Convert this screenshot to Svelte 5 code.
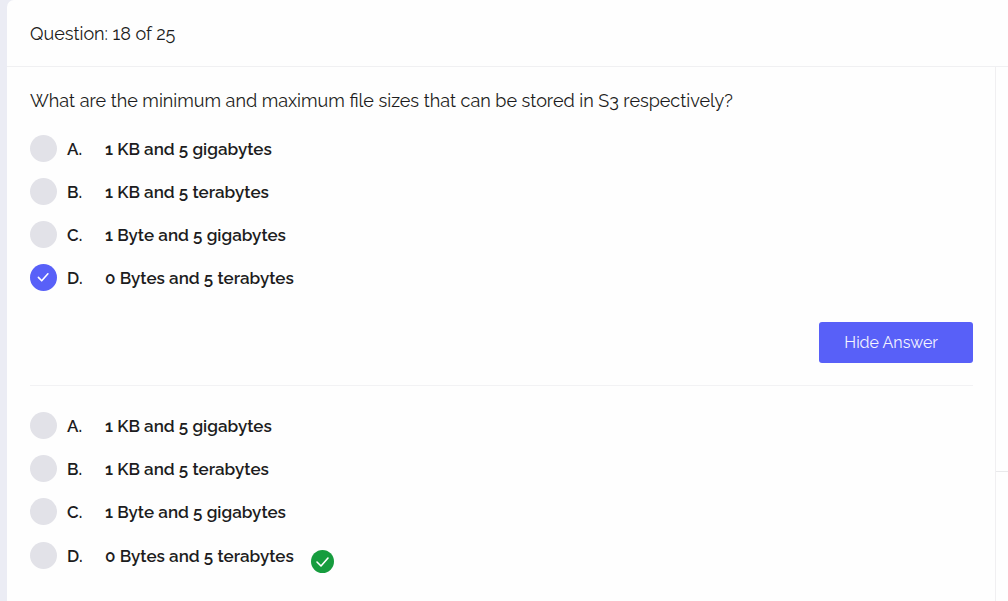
<script>
  const options = [
    { letter: 'A', text: '1 KB and 5 gigabytes' },
    { letter: 'B', text: '1 KB and 5 terabytes' },
    { letter: 'C', text: '1 Byte and 5 gigabytes' },
    { letter: 'D', text: '0 Bytes and 5 terabytes' }
  ];
  const correct = 'D';
  let selected = $state('D');
  let review = $state('');
  let answerShown = $state(true);
</script>

<div class="page">
  <div class="quiz">
    <header>Question: 18 of 25</header>
    <div class="columns">
      <main>
        <p class="question" id="question">What are the minimum and maximum file sizes that can be stored in S3 respectively?</p>

        <div class="options" role="radiogroup" aria-labelledby="question">
          {#each options as option}
            <label class="option">
              <span class="mark">
                <input type="radio" name="choice" value={option.letter} bind:group={selected} />
                <svg viewBox="0 0 27 27" aria-hidden="true"><path d="M8.4 13.4l3.3 3.4 6.2-7" /></svg>
              </span>
              <span class="letter">{option.letter}.</span>
              <span>{option.text}</span>
            </label>
          {/each}
        </div>

        <div class="actions">
          <button type="button" onclick={() => (answerShown = !answerShown)}>
            {answerShown ? 'Hide Answer' : 'Show Answer'}
          </button>
        </div>

        {#if answerShown}
          <div class="options answer" role="radiogroup" aria-labelledby="question">
            {#each options as option}
              <label class="option">
                <span class="mark">
                  <input type="radio" name="review" value={option.letter} bind:group={review} />
                  <svg viewBox="0 0 27 27" aria-hidden="true"><path d="M8.4 13.4l3.3 3.4 6.2-7" /></svg>
                </span>
                <span class="letter">{option.letter}.</span>
                <span>{option.text}</span>
                {#if option.letter === correct}
                  <svg class="correct" viewBox="0 0 23 23" aria-hidden="true">
                    <circle cx="11.5" cy="11.5" r="11.5" />
                    <path d="M6 12l4 4 7-8" />
                  </svg>
                {/if}
              </label>
            {/each}
          </div>
        {/if}
      </main>
      <aside><div class="panel"></div></aside>
    </div>
  </div>
</div>

<style>
  :global(body) {
    margin: 0;
    background: #ebecf4;
  }
  .page {
    box-sizing: border-box;
    min-height: 100vh;
    display: flex;
    padding-left: 7px;
    font-family: Raleway, Lato, sans-serif;
    font-size: 18px;
    line-height: 24px;
    color: #1c1c20;
  }
  .quiz {
    flex: 1;
    display: flex;
    flex-direction: column;
    background: #fefefe;
    border-top-left-radius: 7px;
  }
  header {
    padding: 22px 23px 20px;
    border-bottom: 1px solid #f0f0f2;
  }
  .columns {
    flex: 1;
    display: flex;
  }
  main {
    flex: 1;
    padding: 22px 22px 24px 23px;
    border-right: 1px solid #f0eff1;
  }
  aside {
    width: 12px;
    display: flex;
    flex-direction: column;
  }
  .panel {
    height: 404px;
    border-bottom: 1px solid #e9e9eb;
  }
  .question {
    margin: 0 0 22px;
  }
  .options {
    display: flex;
    flex-direction: column;
    align-items: flex-start;
    gap: 16px;
  }
  .option {
    display: flex;
    align-items: center;
    font-size: 17px;
    font-weight: 600;
    cursor: pointer;
  }
  .mark {
    display: grid;
    width: 27px;
    height: 27px;
    margin-right: 10px;
  }
  .mark input,
  .mark svg {
    grid-area: 1 / 1;
    width: 27px;
    height: 27px;
    margin: 0;
  }
  .mark input {
    appearance: none;
    border-radius: 50%;
    background: #e2e2e8;
    cursor: pointer;
  }
  .mark input:checked {
    background: #5860f8;
  }
  .mark svg {
    visibility: hidden;
    pointer-events: none;
  }
  .mark input:checked + svg {
    visibility: visible;
  }
  path {
    fill: none;
    stroke: #fff;
    stroke-width: 1.6;
    stroke-linecap: round;
    stroke-linejoin: round;
  }
  .letter {
    width: 38px;
  }
  .actions {
    display: flex;
    justify-content: flex-end;
    margin-top: 31px;
    padding-bottom: 22px;
    border-bottom: 1px solid #f2f2f4;
  }
  button {
    padding: 9px 35px 8px 25px;
    border: 0;
    border-radius: 3px;
    background: #5860f8;
    color: #f4f4ff;
    font: inherit;
    font-size: 16px;
    cursor: pointer;
  }
  .answer {
    margin-top: 26px;
  }
  .correct {
    align-self: flex-start;
    width: 23px;
    height: 23px;
    margin: 9px 0 -3px 17px;
  }
  .correct circle {
    fill: #169c3e;
  }
</style>
